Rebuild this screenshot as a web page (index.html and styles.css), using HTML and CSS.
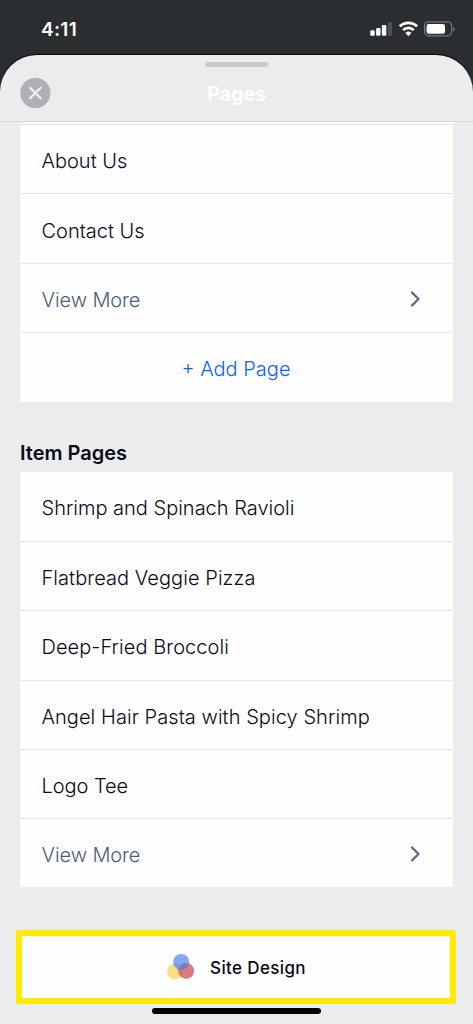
FILE: index.html
```html
<!DOCTYPE html>
<html lang="en">
<head>
<meta charset="utf-8">
<title>Pages</title>
<link rel="stylesheet" href="styles.css">
</head>
<body>
<div class="phone">
  <div class="status">
    <span class="time">4:11</span>
    <svg class="signals" width="86" height="18" viewBox="0 0 86 18">
      <g fill="#fff"><rect x="1.3" y="10.2" width="4.4" height="5.6" rx="1.2"/><rect x="7.1" y="8" width="4.4" height="7.8" rx="1.2"/><rect x="12.9" y="5" width="4.4" height="10.8" rx="1.2"/></g>
      <rect x="18.8" y="2" width="4.2" height="14" rx="1.2" fill="#505254"/>
      <g transform="translate(1.2 0)"><g fill="none" stroke="#fff" stroke-width="2.7"><path d="M29.5 6.3a12.6 12.6 0 0 1 17.4 0"/><path d="M32.9 10.1a7.5 7.5 0 0 1 10.6 0"/></g>
      <path d="M35.2 13a4.4 4.4 0 0 1 6 0l-3 3.2z" fill="#fff"/></g>
      <rect x="55.6" y="1.8" width="27" height="14" rx="4" fill="none" stroke="#777a7c" stroke-width="1.3"/>
      <rect x="57.6" y="4" width="18.4" height="9.8" rx="2" fill="#fff"/>
      <path d="M84 7v4.5q1.7-.7 1.7-2.2T84 7z" fill="#777a7c"/>
    </svg>
  </div>
  <main class="sheet">
    <header class="bar">
      <div class="grabber"></div>
      <div class="heading">
        <svg class="close" width="31" height="31" viewBox="0 0 31 31"><circle cx="15.4" cy="15" r="15.1" fill="#aeb1b3"/><path d="M10.1 9.7l10.6 10.6M20.7 9.7L10.1 20.3" stroke="#f0f1f2" stroke-width="2.3" stroke-linecap="round"/></svg>
        <h1 class="title">Pages</h1>
      </div>
    </header>
    <section class="card pages">
      <div class="row"><span>About Us</span></div>
      <div class="row"><span>Contact Us</span></div>
      <div class="row more"><span>View More</span><svg class="chevron" width="14" height="18" viewBox="0 0 14 18"><path d="M3 2.5L9.5 9L3 15.5"/></svg></div>
      <div class="row add"><span>+ Add Page</span></div>
    </section>
    <h2 class="subtitle">Item Pages</h2>
    <section class="card items">
      <div class="row high"><span>Shrimp and Spinach Ravioli</span></div>
      <div class="row wide"><span>Flatbread Veggie Pizza</span></div>
      <div class="row wide high"><span>Deep-Fried Broccoli</span></div>
      <div class="row wide"><span>Angel Hair Pasta with Spicy Shrimp</span></div>
      <div class="row tight"><span>Logo Tee</span></div>
      <div class="row more"><span>View More</span><svg class="chevron" width="14" height="18" viewBox="0 0 14 18"><path d="M3 2.5L9.5 9L3 15.5"/></svg></div>
    </section>
    <div class="design">
      <svg width="28" height="26" viewBox="0 0 28 26"><circle cx="8" cy="17.4" r="8" fill="#f7d970" fill-opacity=".85"/><circle cx="19.2" cy="16.8" r="8" fill="#cc534d" fill-opacity=".75"/><circle cx="14.2" cy="8" r="8" fill="#4778f5" fill-opacity=".66"/></svg>
      <span>Site Design</span>
    </div>
    <div class="home"></div>
  </main>
</div>
</body>
</html>
```
FILE: styles.css
```css
* { box-sizing: border-box; }
body { margin: 0; background: #2a2e31; font-family: Inter, "Liberation Sans", sans-serif; }
.phone { width: 473px; height: 1024px; overflow: hidden; background: #2a2e31; display: flex; flex-direction: column; }
.status { height: 55px; padding: 4px 18px 0 41px; display: flex; align-items: center; justify-content: space-between; flex: none; }
.signals { margin-top: -1px; }
.time { color: #fff; font-size: 19px; font-weight: 600; letter-spacing: .3px; }
.sheet { flex: none; height: 969px; background: #ebecee; border-radius: 37px 37px 0 0; display: flex; flex-direction: column; box-shadow: 0 -1px 1px #08090a; }
.bar { height: 67px; flex: none; border-bottom: 1px solid #d8d9db; padding: 7px 20px 0; }
.grabber { width: 63px; height: 5px; border-radius: 3px; background: #c8c9cb; margin: 0 auto; }
.heading { display: grid; grid-template-columns: 31px 1fr 31px; align-items: center; margin-top: 10px; }
.title { margin: 2px 0 0; text-align: center; color: #fff; font-size: 20px; line-height: 30px; font-weight: 600; letter-spacing: -.1px; }
.card { margin: 0 20px; background: #fefefe; flex: none; }
.pages { border-top: 2px solid #f9f9fa; height: 280px; display: grid; grid-template-rows: 70px 70px 69px 69px; }
.items { height: 415px; display: grid; grid-template-rows: 70px 69px 70px 69px 69px 68px; }
.row { display: flex; align-items: center; justify-content: space-between; padding: 4px 30px 0 21.5px; border-bottom: 1px solid #e6e7e9; font-size: 20px; line-height: 24px; font-weight: 300; color: #080a20; white-space: nowrap; }
.pages .row:first-child { border-top: 1px solid #e2e3e5; }
.row:last-child { border-bottom: 0; }
.items .high { padding-top: 3px; }
.wide { letter-spacing: .06px; }
.tight { letter-spacing: -.05px; }
.more { color: #4a5f78; letter-spacing: -.08px; }
.chevron { fill: none; stroke: #586a85; stroke-width: 2.3; stroke-linecap: round; stroke-linejoin: round; margin-top: -2px; }
.add { justify-content: center; color: #1261f5; padding: 2px 1px 0 0; }
.subtitle { height: 70px; flex: none; margin: 0 20px; padding-top: 39px; color: #080a18; font-size: 20px; line-height: 24px; font-weight: 600; }
.items .more { padding-top: 3px; }
.design { flex: none; margin: 43px 17px 0 16px; height: 74px; border: 6px solid #ffeb00; border-radius: 3px; background: #fefefe; display: flex; align-items: center; justify-content: center; gap: 15px; padding: 2px 0 0 1px; color: #080a18; font-size: 17px; font-weight: 500; letter-spacing: .36px; }
.design svg { margin-top: -3px; }
.home { width: 169px; height: 6px; flex: none; margin: 4px auto 0; border-radius: 3px; background: #000; }
```
